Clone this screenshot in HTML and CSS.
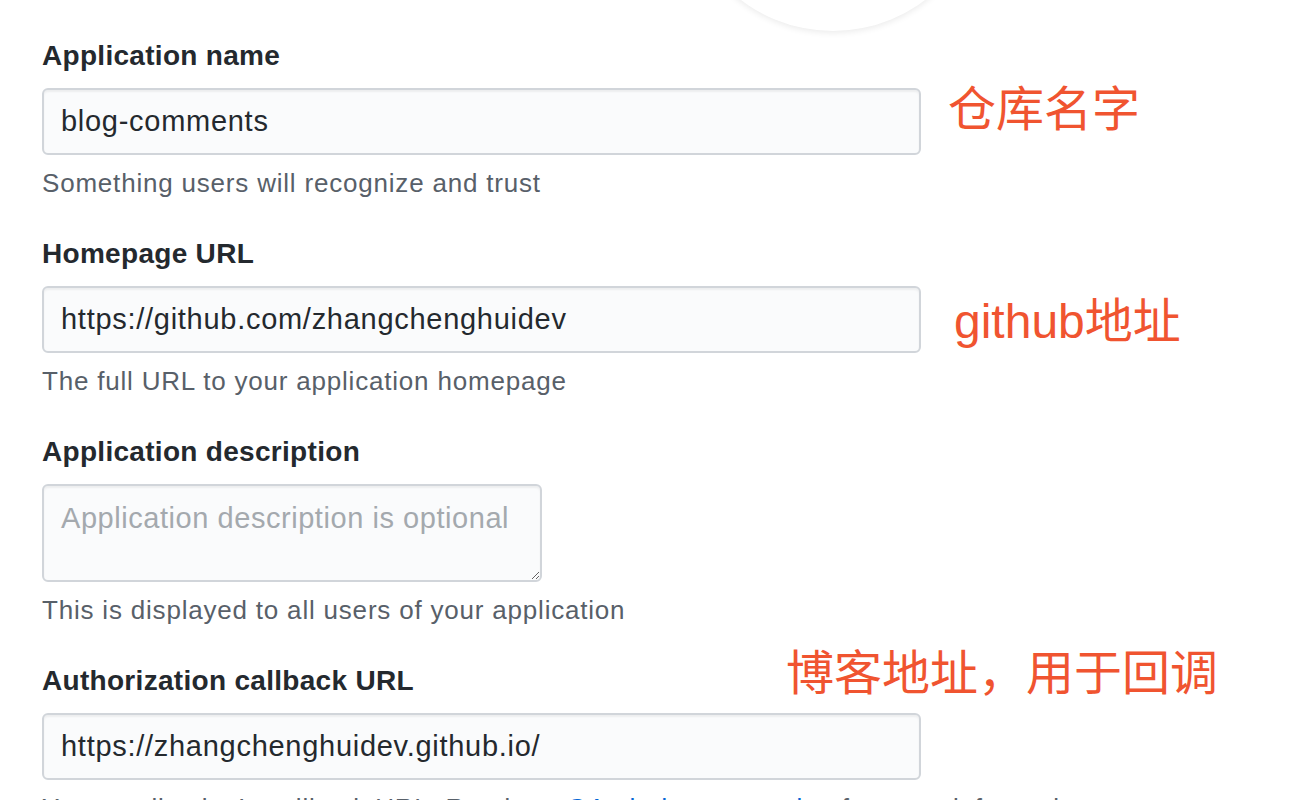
FILE: index.html
```html
<!DOCTYPE html>
<html lang="en">
<head>
<meta charset="utf-8">
<title>Register a new OAuth application</title>
<link rel="stylesheet" href="styles.css">
</head>
<body>
<div class="page">
  <div class="avatar-circle"></div>
  <form class="oauth-form">
    <div class="form-group">
      <label class="form-label" for="app-name">Application name</label>
      <input class="form-control wide" id="app-name" type="text" value="blog-comments">
      <p class="note">Something users will recognize and trust</p>
    </div>
    <div class="form-group">
      <label class="form-label" for="home-url">Homepage URL</label>
      <input class="form-control wide" id="home-url" type="text" value="https://github.com/zhangchenghuidev">
      <p class="note">The full URL to your application homepage</p>
    </div>
    <div class="form-group">
      <label class="form-label" for="app-desc">Application description</label>
      <textarea class="form-control textarea" id="app-desc" placeholder="Application description is optional"></textarea>
      <p class="note">This is displayed to all users of your application</p>
    </div>
    <div class="form-group">
      <label class="form-label" for="cb-url">Authorization callback URL</label>
      <input class="form-control wide" id="cb-url" type="text" value="https://zhangchenghuidev.github.io/">
      <p class="note">Your application’s callback URL. Read our <a class="link" href="#">OAuth documentation</a> for more information.</p>
    </div>
  </form>
  <div class="annot annot-name">仓库名字</div>
  <div class="annot annot-home">github地址</div>
  <div class="annot annot-cb">博客地址，用于回调</div>
</div>
</body>
</html>
```
FILE: styles.css
```css
html, body {
  margin: 0;
  padding: 0;
  background: #ffffff;
}
body {
  font-family: "Liberation Sans", Arial, sans-serif;
  color: #24292e;
  overflow: hidden;
  height: 800px;
}
.page {
  position: relative;
  width: 1310px;
  height: 800px;
  overflow: hidden;
}
.avatar-circle {
  position: absolute;
  left: 681px;
  top: -273px;
  width: 304px;
  height: 304px;
  border-radius: 50%;
  background: #ffffff;
  box-shadow: 0 2px 6px rgba(0, 0, 0, 0.08);
}
.oauth-form {
  padding: 38px 0 0 42px;
  display: flex;
  flex-direction: column;
  gap: 36px;
}
.form-group {
  display: flex;
  flex-direction: column;
  align-items: flex-start;
}
.form-label {
  font-size: 28px;
  font-weight: bold;
  letter-spacing: 0.3px;
  line-height: 36px;
  color: #24292e;
  margin-bottom: 14px;
}
.form-control {
  box-sizing: border-box;
  border: 2px solid #d1d5da;
  border-radius: 6px;
  background: #fafbfc;
  font-family: "Liberation Sans", Arial, sans-serif;
  font-size: 29px;
  letter-spacing: 0.72px;
  color: #24292e;
  padding: 0 17px;
  margin: 0;
  outline: none;
  box-shadow: inset 0 2px 2px rgba(27, 31, 35, 0.06);
}
.wide {
  width: 879px;
  height: 67px;
}
.textarea {
  width: 500px;
  height: 98px;
  padding: 14px 17px;
  line-height: 36px;
  letter-spacing: 0.55px;
  resize: vertical;
}
.textarea::placeholder {
  color: #a4a9ae;
}
.note {
  margin: 11px 0 0 0;
  font-size: 26px;
  letter-spacing: 0.8px;
  line-height: 34px;
  color: #586069;
}
.link {
  color: #0366d6;
  text-decoration: none;
}
.annot {
  position: absolute;
  font-family: "Liberation Sans", "Noto Sans CJK SC", sans-serif;
  font-size: 48px;
  line-height: 60px;
  color: #f05430;
  white-space: nowrap;
}
.annot-name {
  left: 948px;
  top: 80px;
}
.annot-home {
  left: 954px;
  top: 292px;
}
.annot-cb {
  left: 786px;
  top: 644px;
}
```
